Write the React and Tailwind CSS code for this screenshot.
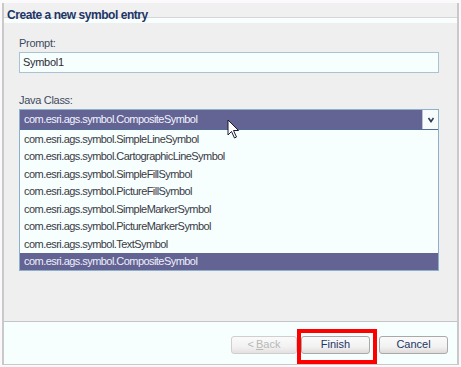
export default function App() {
  const items = [
    "com.esri.ags.symbol.SimpleLineSymbol",
    "com.esri.ags.symbol.CartographicLineSymbol",
    "com.esri.ags.symbol.SimpleFillSymbol",
    "com.esri.ags.symbol.PictureFillSymbol",
    "com.esri.ags.symbol.SimpleMarkerSymbol",
    "com.esri.ags.symbol.PictureMarkerSymbol",
    "com.esri.ags.symbol.TextSymbol",
    "com.esri.ags.symbol.CompositeSymbol",
  ];
  const font = { fontFamily: "'Liberation Sans', Arial, sans-serif" };
  return (
    <div className="w-[461px] h-[367px] bg-[#fbf9fb] relative overflow-hidden pt-[3px] pl-[2px] pr-[2px] pb-[2px]" style={font}>
      <div className="h-[362px] flex flex-col border-l-2 border-r-2 border-b border-[#c9c9c9] bg-[#efefef]">
        <div className="relative h-[15px] bg-[#f0f0f0] border-b border-[#d6d6d6]">
          <span className="absolute left-[3px] top-[5px] z-10 text-[12px] leading-[14px] font-bold text-[#1d3566] tracking-[-0.45px]">Create a new symbol entry</span>
        </div>
        <div className="h-[5px] bg-[#f8fefe]" />
        <div className="flex-1 flex flex-col pl-[15px] pr-[18px] tracking-[-0.3px]">
          <div className="mt-[14px] text-[11px] leading-[13px] text-[#3d4a5e]">Prompt:</div>
          <div className="mt-[2px] h-[21px] border border-[#a9c3d3] bg-[#f6fefe] flex items-center px-[3px] text-[11px] text-[#2b2b33]">Symbol1</div>
          <div className="mt-[21px] text-[11px] leading-[13px] text-[#3d4a5e]">Java Class:</div>
          <div className="mt-[2px] flex flex-col border border-[#8db0cc] tracking-[-0.55px]">
            <div className="h-[20px] flex items-stretch bg-[#636394] border-b border-[#4f6d96]">
              <div className="flex-1 flex items-center px-[4px] text-[11px] text-[#f2f4ff]">com.esri.ags.symbol.CompositeSymbol</div>
              <div className="w-[16px] bg-[#f8fbfb] border-l border-[#b8c4cc] flex items-center justify-center">
                <svg width="8" height="6" viewBox="0 0 8 6"><path d="M1.5 1 L4 4.5 L6.5 1" stroke="#2d3b55" strokeWidth="1.6" fill="none" /></svg>
              </div>
            </div>
            <div className="bg-[#f6fefe] flex flex-col">
              {items.map((t, i) => (
                <div
                  key={t}
                  className={
                    i === items.length - 1
                      ? "h-[17.5px] flex items-center px-[4px] text-[11px] bg-[#636394] text-[#eef0fb]"
                      : "h-[17.5px] flex items-center px-[4px] text-[11px] text-[#3a3a44]"
                  }
                >
                  {t}
                </div>
              ))}
            </div>
          </div>
        </div>
        <div className="h-[1px] bg-[#c4c4c4]" />
        <div className="h-[42px] bg-[#f6fefe] flex items-center justify-end pr-[9px] pt-[3px]">
          <div className="w-[66px] h-[18px] rounded-[3px] border border-[#cfcfcf] bg-[linear-gradient(#fafafa,#f2f2f2_60%,#e6e0e0)] flex items-center justify-center text-[11px] text-[#b8b8b8]">
            &lt; <span className="underline ml-[2px]">B</span>ack
          </div>
          <div className="w-[69px] h-[18px] ml-[4px] rounded-[3px] border border-[#a9a9a9] bg-[linear-gradient(#fafafa,#f2f2f2_60%,#e0dada)] flex items-center justify-center text-[11px] text-[#1d3566]">Finish</div>
          <div className="w-[69px] h-[18px] ml-[9px] rounded-[3px] border border-[#a9a9a9] bg-[linear-gradient(#fafafa,#f2f2f2_60%,#e0dada)] flex items-center justify-center text-[11px] text-[#1d3566]">Cancel</div>
        </div>
      </div>
      <div className="absolute left-[297px] top-[329px] w-[80px] h-[35px] border-[4px] border-[#ff0000]" />
      <svg className="absolute left-[227px] top-[119px]" width="14" height="22" viewBox="0 0 14 22">
        <path d="M1 1 L1 16 L4.5 12.5 L7.5 19 L9.5 18 L6.5 11.5 L11.5 11.5 Z" fill="#ffffff" stroke="#1a1a2e" strokeWidth="1" strokeLinejoin="miter" />
      </svg>
    </div>
  );
}
